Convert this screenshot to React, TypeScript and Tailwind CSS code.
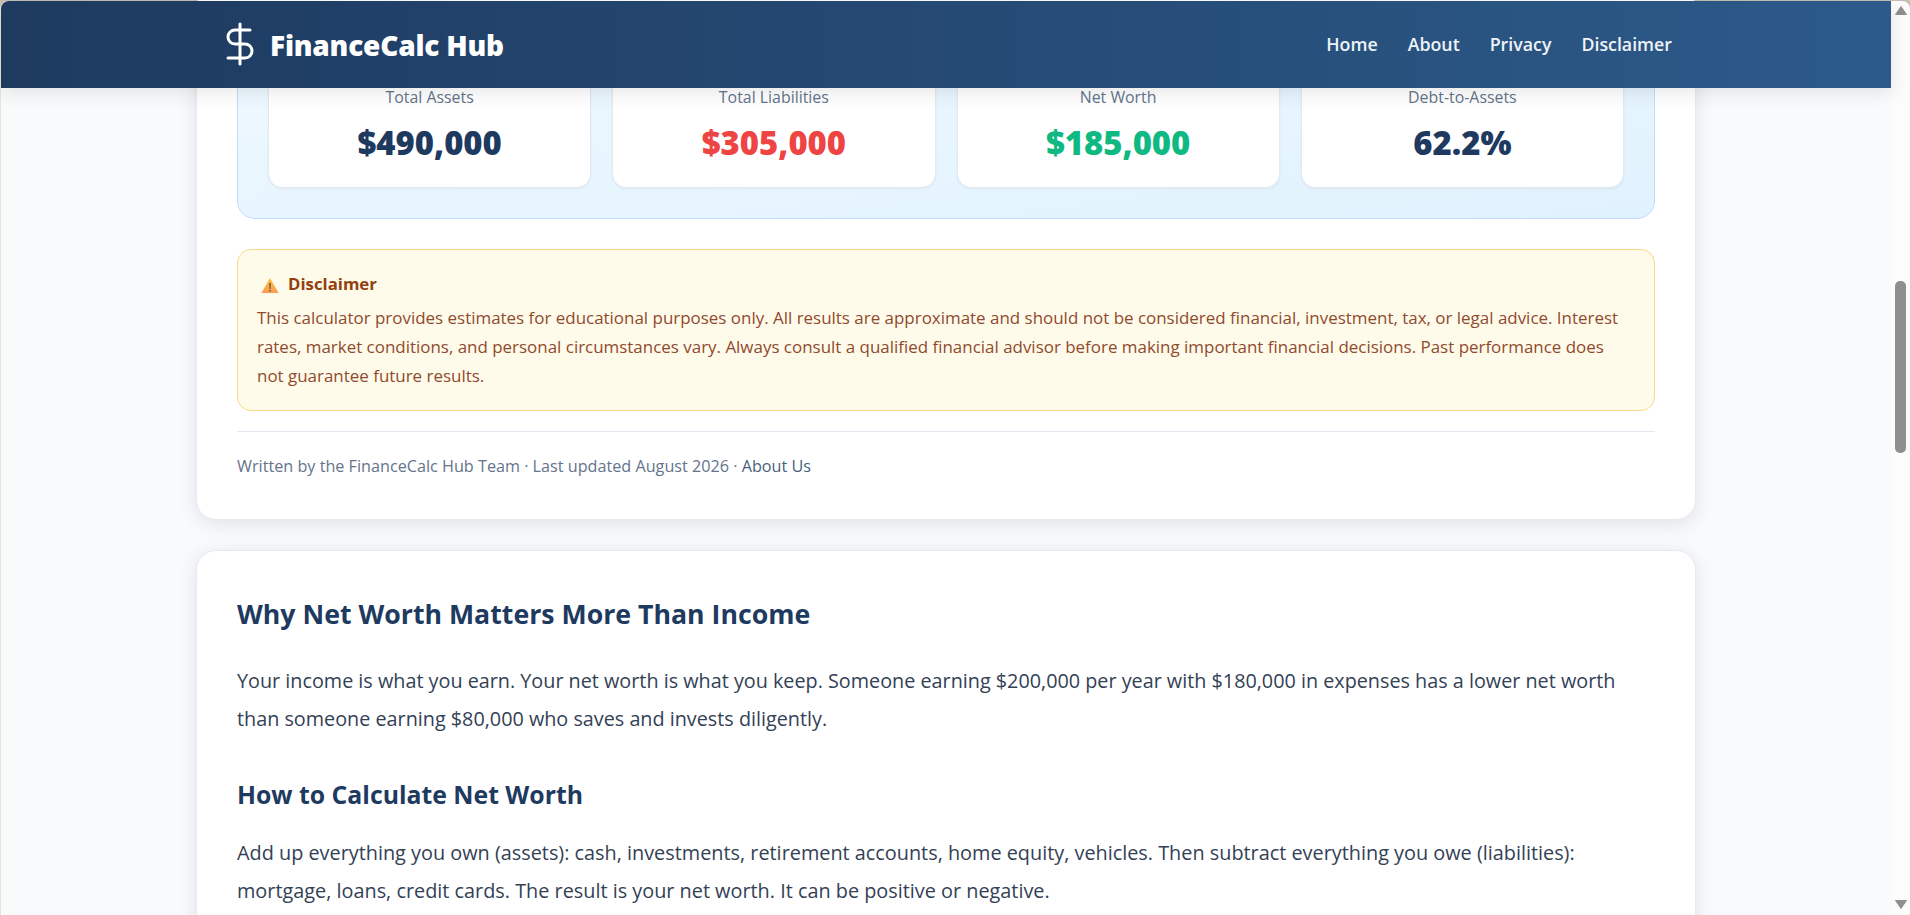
import React from "react";

const stats = [
  { label: "Total Assets", value: "$490,000", color: "text-[#1e3a5f]" },
  { label: "Total Liabilities", value: "$305,000", color: "text-[#ef4444]" },
  { label: "Net Worth", value: "$185,000", color: "text-[#10b981]" },
  { label: "Debt-to-Assets", value: "62.2%", color: "text-[#1e3a5f]" },
];

const FONT = "font-['Open_Sans','Noto_Sans',sans-serif]";

export default function App() {
  return (
    <div className={`flex h-screen overflow-hidden bg-[#c8bfb3] text-[#334155] ${FONT}`}>
      <div className="mt-px flex min-w-0 flex-1 flex-col rounded-tl-lg border-l border-[#e8e2d8] bg-[#f9fafc]">
        <header className="relative z-10 flex h-[87px] shrink-0 items-center justify-between rounded-tl-lg bg-gradient-to-r from-[#1e3a5f] to-[#2c5a8a] pl-[215px] pr-[219px] text-white shadow-[0_4px_20px_rgba(0,0,0,0.1)]">
          <div className="flex items-center gap-[6px]">
            <svg width="48" height="48" viewBox="0 0 24 24" fill="none" stroke="white" strokeWidth="1.5" strokeLinecap="round" strokeLinejoin="round" className="mb-[1px]">
              <line x1="12" y1="2" x2="12" y2="22" />
              <path d="M17 5H9.5a3.5 3.5 0 0 0 0 7h5a3.5 3.5 0 0 1 0 7H6" />
            </svg>
            <span className="text-[28px] font-extrabold tracking-[-0.2px]">FinanceCalc Hub</span>
          </div>
          <nav className="flex gap-[30px] text-[17.8px] font-semibold text-[#eef3f8]">
            <a>Home</a>
            <a>About</a>
            <a>Privacy</a>
            <a>Disclaimer</a>
          </nav>
        </header>
        <main className="min-h-0 flex-1">
          <div className="mx-auto -mt-[100px] flex w-[1500px] flex-col gap-[30px]">
            <section className="rounded-[20px] border border-[#e6eaf0] bg-white px-[40px] pb-[40px] pt-[39px] shadow-[0_4px_20px_rgba(15,23,42,0.1)]">
              <div className="rounded-[18px] border border-[#bfdbfe] bg-gradient-to-br from-[#f0f9ff] to-[#e0f2fe] px-[30px] pb-[30px] pt-[31px]">
                <div className="grid grid-cols-4 gap-[21px]">
                  {stats.map((s) => (
                    <div key={s.label} className="h-[128px] rounded-[14px] border border-[#e2e8f0] bg-white pt-[23px] text-center shadow-[0_1px_3px_rgba(0,0,0,0.05)]">
                      <div className="text-[15.9px] leading-[26px] text-[#64748b]">{s.label}</div>
                      <div className={`mt-[13px] text-[32.8px] font-extrabold leading-[40px] ${s.color}`}>{s.value}</div>
                    </div>
                  ))}
                </div>
              </div>
              <div className="mt-[30px] rounded-[14px] border border-[#fcd68a] bg-[#fffbeb] pb-[20px] pl-[19px] pr-[24px] pt-[21px] text-[#92400e]">
                <div className="flex items-center gap-[9px] pl-[4px] text-[16.8px] font-bold leading-[26px]">
                  <svg width="18" height="17" viewBox="0 0 18 16" className="mt-[3px]">
                    <defs>
                      <linearGradient id="warn" x1="0" y1="0" x2="0" y2="1">
                        <stop offset="0" stopColor="#fbc23f" />
                        <stop offset="1" stopColor="#f89c55" />
                      </linearGradient>
                    </defs>
                    <path d="M9 0.5 17.6 15.5H0.4Z" fill="url(#warn)" />
                    <path d="M8.4 5.5h1.2l-.2 6h-.8zM8.4 12.4h1.2v1.6H8.4z" fill="#4a3320" />
                  </svg>
                  <span>Disclaimer</span>
                </div>
                <p className="mt-[6px] text-[16.95px] leading-[29px] text-[#8f4a2d]">
                  This calculator provides estimates for educational purposes only. All results are approximate and should not be considered financial, investment, tax, or legal advice. Interest rates, market conditions, and personal circumstances vary. Always consult a qualified financial advisor before making important financial decisions. Past performance does not guarantee future results.
                </p>
              </div>
              <div className="mt-[20px] border-t border-[#e2e8f0] pt-[21px] text-[16.2px] leading-[26px] text-[#64748b]">
                Written by the FinanceCalc Hub Team · Last updated August 2026 · <a className="text-[#475f7d]">About Us</a>
              </div>
            </section>
            <section className="rounded-[20px] border border-[#e6eaf0] bg-white px-[40px] pb-[60px] pt-[40px] shadow-[0_4px_20px_rgba(15,23,42,0.1)]">
              <h2 className="text-[26.7px] font-bold leading-[46px] text-[#1e3a5f]">Why Net Worth Matters More Than Income</h2>
              <p className="mt-[25px] text-[19.8px] leading-[38px] text-[#334155]">
                Your income is what you earn. Your net worth is what you keep. Someone earning $200,000 per year with $180,000 in expenses has a lower net worth than someone earning $80,000 who saves and invests diligently.
              </p>
              <h3 className="mt-[37px] text-[24.8px] font-bold leading-[38px] text-[#1e3a5f]">How to Calculate Net Worth</h3>
              <p className="mt-[21px] text-[19.85px] leading-[38px] text-[#334155]">
                Add up everything you own (assets): cash, investments, retirement accounts, home equity, vehicles. Then subtract everything you owe (liabilities): mortgage, loans, credit cards. The result is your net worth. It can be positive or negative.
              </p>
            </section>
          </div>
        </main>
      </div>
      <aside className="mt-px flex w-[19px] shrink-0 flex-col items-center rounded-tr-lg bg-[#fcfcfd] pt-[5px]">
        <svg width="12" height="9" viewBox="0 0 12 9" className="shrink-0"><path d="M6 0.5 11.5 8.5H0.5Z" fill="#8f8f8f" stroke="#8f8f8f" strokeLinejoin="round" /></svg>
        <div className="mt-[266px] h-[172px] w-[11px] shrink-0 rounded-[5px] bg-[#8f8f8f]" />
        <svg width="12" height="9" viewBox="0 0 12 9" className="mb-[6px] mt-auto shrink-0"><path d="M0.5 0.5H11.5L6 8.5Z" fill="#8f8f8f" stroke="#8f8f8f" strokeLinejoin="round" /></svg>
      </aside>
    </div>
  );
}
